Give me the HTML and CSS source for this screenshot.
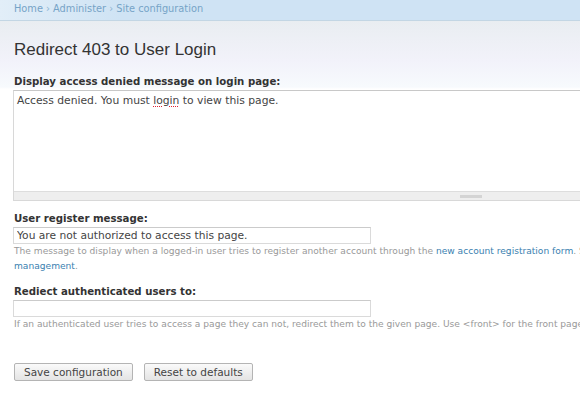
FILE: index.html
```html
<!DOCTYPE html>
<html lang="en">
<head>
    <meta charset="UTF-8">
    <title>Redirect 403 to User Login</title>
    <link rel="stylesheet" href="styles.css">
</head>
<body>
    <div class="breadcrumb">
        <a href="#">Home</a> › <a href="#">Administer</a> › <a href="#">Site configuration</a>
    </div>
    <div class="page">
        <h1>Redirect 403 to User Login</h1>
        <form class="settings">
            <div class="form-item">
                <label>Display access denied message on login page:</label>
                <div class="textarea">
                    <div class="textarea-text">Access denied. You must <span class="misspelled">login</span> to view this page.</div>
                    <div class="grippie"><span class="grip"></span></div>
                </div>
            </div>
            <div class="form-item">
                <label>User register message:</label>
                <input type="text" class="text-input" value="You are not authorized to access this page.">
                <div class="description">The message to display when a logged-in user tries to register another account through the <a href="#">new account registration form</a>. See also the settings for account <a href="#">management</a>.</div>
            </div>
            <div class="form-item">
                <label>Rediect authenticated users to:</label>
                <input type="text" class="text-input" value="">
                <div class="description">If an authenticated user tries to access a page they can not, redirect them to the given page. Use &lt;front&gt; for the front page.</div>
            </div>
            <div class="buttons">
                <button type="button">Save configuration</button>
                <button type="button">Reset to defaults</button>
            </div>
        </form>
    </div>
</body>
</html>
```

FILE: styles.css
```css
html, body {
    overflow: hidden;
}
body {
    margin: 0;
    background: #fff;
    font-family: "DejaVu Sans", Verdana, sans-serif;
    color: #333;
}
a {
    color: #3a7fb0;
    text-decoration: none;
}
.breadcrumb {
    height: 20px;
    line-height: 17px;
    padding-left: 14px;
    font-size: 9.8px;
    color: #8db3d1;
    background: linear-gradient(to right, #e2eef8, #cfe3f4 120px);
    border-bottom: 1px solid #c3d6e4;
}
.breadcrumb a {
    color: #76a3c7;
}
.page {
    width: 720px;
    padding: 0 0 20px 13px;
    background: linear-gradient(to bottom, #e9edf1 0, #f2f2fa 40px, #f7fafd 66px, #fff 68px);
}
h1 {
    margin: 0 0 15px 0;
    padding: 19px 0 0 1px;
    font-family: "Liberation Sans", Arial, sans-serif;
    font-size: 17px;
    line-height: 20px;
    font-weight: normal;
    color: #333;
}
.form-item {
    margin-bottom: 11px;
}
.form-item label {
    display: block;
    padding-left: 1px;
    margin-bottom: 2px;
    font-size: 10.2px;
    line-height: 13px;
    font-weight: bold;
    color: #333;
}
.textarea {
    margin-bottom: 5px;
    border: 1px solid #d8d8d8;
    border-top-color: #c8c8c8;
    background: #fff;
}
.textarea-text {
    height: 95px;
    padding: 3px 3px 2px 3px;
    font-size: 10.75px;
    line-height: 13px;
    color: #444;
}
.misspelled {
    text-decoration: underline dotted #d23;
    text-decoration-thickness: 1px;
    text-underline-offset: 2px;
}
.grippie {
    height: 8px;
    background: #eee;
    border-top: 1px solid #ddd;
    padding-left: 446px;
}
.grip {
    display: block;
    width: 22px;
    height: 3px;
    margin-top: 3px;
    background: #d4d4d4;
}
.text-input {
    display: block;
    box-sizing: border-box;
    width: 358px;
    height: 17px;
    margin: 0;
    padding: 0 3px;
    border: 1px solid #dadada;
    border-top-color: #cbcbcb;
    font-family: "DejaVu Sans", Verdana, sans-serif;
    font-size: 10.7px;
    color: #444;
}
.description {
    padding-left: 1px;
    font-size: 9.1px;
    line-height: 15px;
    color: #999;
}
.buttons {
    display: flex;
    gap: 11px;
    padding-top: 20px;
    padding-left: 1px;
}
.buttons button {
    height: 18px;
    padding: 0 9px;
    border: 1px solid #b4b4b4;
    border-radius: 2px;
    background: linear-gradient(#fafafa, #e4e4e4);
    font-family: "DejaVu Sans", Verdana, sans-serif;
    font-size: 10.5px;
    color: #444;
}
```
